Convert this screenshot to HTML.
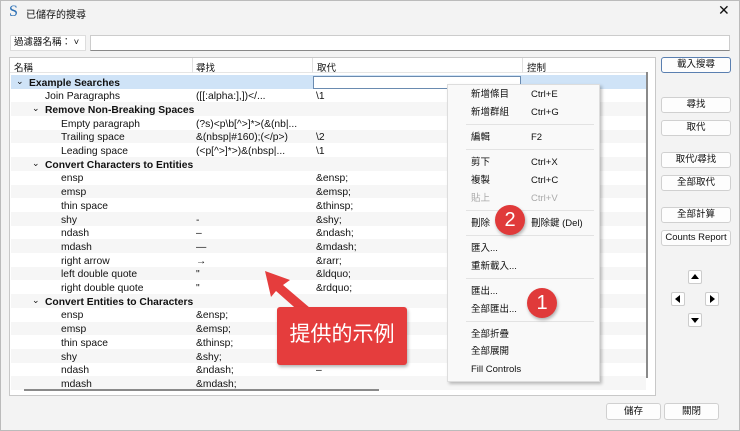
<!DOCTYPE html><html><head><meta charset="utf-8"><style>
*{margin:0;padding:0;box-sizing:border-box}
body{width:740px;height:431px;background:#f3f3f3;font-family:"Liberation Sans","Noto Sans CJK TC",sans-serif;font-size:10px;color:#111;position:relative;overflow:hidden}
.a{position:absolute;white-space:nowrap}
.row{position:absolute;left:11px;width:635px;height:13.7px;line-height:13.7px;font-size:10.3px}
.row span{position:absolute;top:1.5px}
.btn{position:absolute;left:661px;width:70px;height:16px;background:#fdfdfd;border:1px solid #d0d0d0;border-radius:3px;text-align:center;line-height:14px;font-size:9.5px}
.mi{position:absolute;left:471px;font-size:9.5px;line-height:12px}
.mk{position:absolute;left:531px;font-size:9.5px;line-height:12px}
.sep{position:absolute;left:466px;width:128px;height:1px;background:#e3e3e3}
.ab{position:absolute;width:14px;height:14px;background:#fff;border:1px solid #ccc;border-radius:2px}
</style></head><body>
<div class="a" style="left:0;top:0;width:740px;height:431px;border:1px solid #bbb"></div>
<div class="a" style="left:9px;top:3px;font-size:16px;color:#2a6fb5;font-family:'Liberation Serif',serif">S</div>
<div class="a" style="left:26px;top:6px;font-size:10px">已儲存的搜尋</div>
<div class="a" style="left:718px;top:2px;font-size:14px">✕</div>
<div class="a" style="left:10px;top:35px;width:76px;height:16px;background:#fff;border:1px solid #ddd;font-size:9.5px;line-height:14px;padding-left:3px">過濾器名稱： ˅</div>
<div class="a" style="left:90px;top:35px;width:640px;height:16px;background:#fff;border:1px solid #ccc;border-bottom-color:#888"></div>
<div class="a" style="left:9px;top:57px;width:647px;height:339px;background:#fff;border:1px solid #c8c8c8"></div>
<div class="a" style="left:10px;top:58px;width:636px;height:15px;background:#fff;border-bottom:1px solid #e5e5e5"></div>
<div class="a" style="left:192px;top:58px;width:1px;height:15px;background:#e0e0e0"></div>
<div class="a" style="left:312px;top:58px;width:1px;height:15px;background:#e0e0e0"></div>
<div class="a" style="left:522px;top:58px;width:1px;height:15px;background:#e0e0e0"></div>
<div class="a" style="left:14px;top:60px;font-size:9.5px">名稱</div>
<div class="a" style="left:196px;top:60px;font-size:9.5px">尋找</div>
<div class="a" style="left:317px;top:60px;font-size:9.5px">取代</div>
<div class="a" style="left:527px;top:60px;font-size:9.5px">控制</div>
<div id="rows"></div>
<div class="a" style="left:313px;top:76px;width:208px;height:13px;border:1px solid #6a8bb0;background:#fff"></div>
<div class="a" style="left:646px;top:72px;width:2px;height:306px;background:#8a8a8a"></div>
<div class="a" style="left:24px;top:389px;width:355px;height:2px;background:#8a8a8a"></div>
<div class="a" style="left:10px;top:391px;width:636px;height:4px;background:#fff"></div>
<!-- menu -->
<div class="a" style="left:447px;top:84px;width:153px;height:298px;background:#f9f9f9;border:1px solid #ddd;box-shadow:2px 2px 3px rgba(0,0,0,.25)"></div>
<div class="mi" style="top:89px">新增條目</div><div class="mk" style="top:89px">Ctrl+E</div>
<div class="mi" style="top:107px">新增群組</div><div class="mk" style="top:107px">Ctrl+G</div>
<div class="sep" style="top:124px"></div>
<div class="mi" style="top:132px">編輯</div><div class="mk" style="top:132px">F2</div>
<div class="sep" style="top:149px"></div>
<div class="mi" style="top:157px">剪下</div><div class="mk" style="top:157px">Ctrl+X</div>
<div class="mi" style="top:175px">複製</div><div class="mk" style="top:175px">Ctrl+C</div>
<div class="mi" style="top:193px;color:#aaa">貼上</div><div class="mk" style="top:193px;color:#aaa">Ctrl+V</div>
<div class="sep" style="top:210px"></div>
<div class="mi" style="top:218px">刪除</div><div class="mk" style="top:218px">刪除鍵 (Del)</div>
<div class="sep" style="top:235px"></div>
<div class="mi" style="top:243px">匯入...</div>
<div class="mi" style="top:261px">重新載入...</div>
<div class="sep" style="top:278px"></div>
<div class="mi" style="top:286px">匯出...</div>
<div class="mi" style="top:304px">全部匯出...</div>
<div class="sep" style="top:321px"></div>
<div class="mi" style="top:329px">全部折疊</div>
<div class="mi" style="top:346px">全部展開</div>
<div class="mi" style="top:364px">Fill Controls</div>
<!-- badges -->
<div class="a" style="left:495px;top:205px;width:30px;height:30px;border-radius:50%;background:#e03a3a;color:#fff;font-size:20px;text-align:center;line-height:30px;box-shadow:1px 2px 3px rgba(0,0,0,.3)">2</div>
<div class="a" style="left:527px;top:288px;width:30px;height:30px;border-radius:50%;background:#e03a3a;color:#fff;font-size:20px;text-align:center;line-height:30px;box-shadow:1px 2px 3px rgba(0,0,0,.3)">1</div>
<!-- callout -->
<svg class="a" style="left:260px;top:268px" width="70" height="50"><polygon points="5,3 30,12 23,17 50,40 42,46 16,23 11,29" fill="#e53d3d"/></svg>
<div class="a" style="left:277px;top:307px;width:130px;height:58px;background:#e53d3d;border-radius:3px;color:#fff;font-size:21px;text-align:center;line-height:56px;box-shadow:1px 2px 3px rgba(0,0,0,.3)">提供的示例</div>
<!-- right buttons -->
<div class="btn" style="top:57px;border-color:#5a7fb0">載入搜尋</div>
<div class="btn" style="top:97px">尋找</div>
<div class="btn" style="top:120px">取代</div>
<div class="btn" style="top:152px">取代/尋找</div>
<div class="btn" style="top:175px">全部取代</div>
<div class="btn" style="top:207px">全部計算</div>
<div class="btn" style="top:230px">Counts Report</div>
<div class="ab" style="left:688px;top:270px"><svg width="12" height="12"><polygon points="2,8 10,8 6,3"/></svg></div>
<div class="ab" style="left:671px;top:292px"><svg width="12" height="12"><polygon points="8,2 8,10 3,6"/></svg></div>
<div class="ab" style="left:705px;top:292px"><svg width="12" height="12"><polygon points="4,2 4,10 9,6"/></svg></div>
<div class="ab" style="left:688px;top:313px"><svg width="12" height="12"><polygon points="2,4 10,4 6,9"/></svg></div>
<div class="a" style="left:606px;top:403px;width:55px;height:17px;background:#fdfdfd;border:1px solid #d0d0d0;border-radius:3px;text-align:center;line-height:15px;font-size:9.5px">儲存</div>
<div class="a" style="left:664px;top:403px;width:55px;height:17px;background:#fdfdfd;border:1px solid #d0d0d0;border-radius:3px;text-align:center;line-height:15px;font-size:9.5px">關閉</div>
<script>
var R=[[0,"Example Searches","","",1],[1,"Join Paragraphs","([[:alpha:],])</...","\\1"],[1,"Remove Non-Breaking Spaces","","",1],[2,"Empty paragraph","(?s)<p\\b[^>]*>(&(nb|...",""],[2,"Trailing space","&(nbsp|#160);(</p>)","\\2"],[2,"Leading space","(<p[^>]*>)&(nbsp|...","\\1"],[1,"Convert Characters to Entities","","",1],[2,"ensp","","&ensp;"],[2,"emsp","","&emsp;"],[2,"thin space","","&thinsp;"],[2,"shy","-","&shy;"],[2,"ndash","–","&ndash;"],[2,"mdash","—","&mdash;"],[2,"right arrow","→","&rarr;"],[2,"left double quote","\"","&ldquo;"],[2,"right double quote","\"","&rdquo;"],[1,"Convert Entities to Characters","","",1],[2,"ensp","&ensp;",""],[2,"emsp","&emsp;",""],[2,"thin space","&thinsp;",""],[2,"shy","&shy;",""],[2,"ndash","&ndash;","–"],[2,"mdash","&mdash;",""]];
var h="";R.forEach(function(r,i){var t=75+i*13.7;var bg=i==0?"#cfe3f7":(i%2?"#fff":"#f6f6f6");var x=r[0]==0?18:(r[0]==1?34:50);
h+='<div class="row" style="top:'+t+'px;background:'+bg+'">'+(r[4]?'<span style="left:'+(x-13)+'px;font-size:9px;top:0">&#8964;</span>':'')+'<span style="left:'+x+'px;'+(r[4]?"font-weight:600":"")+'"></span><span style="left:185px"></span><span style="left:305px"></span></div>';});
document.getElementById("rows").innerHTML=h;
var rows=document.querySelectorAll(".row");R.forEach(function(r,i){var s=rows[i].querySelectorAll("span");var o=r[4]?1:0;s[o].textContent=r[1];s[o+1].textContent=r[2];s[o+2].textContent=r[3];});
</script>
</body></html>
